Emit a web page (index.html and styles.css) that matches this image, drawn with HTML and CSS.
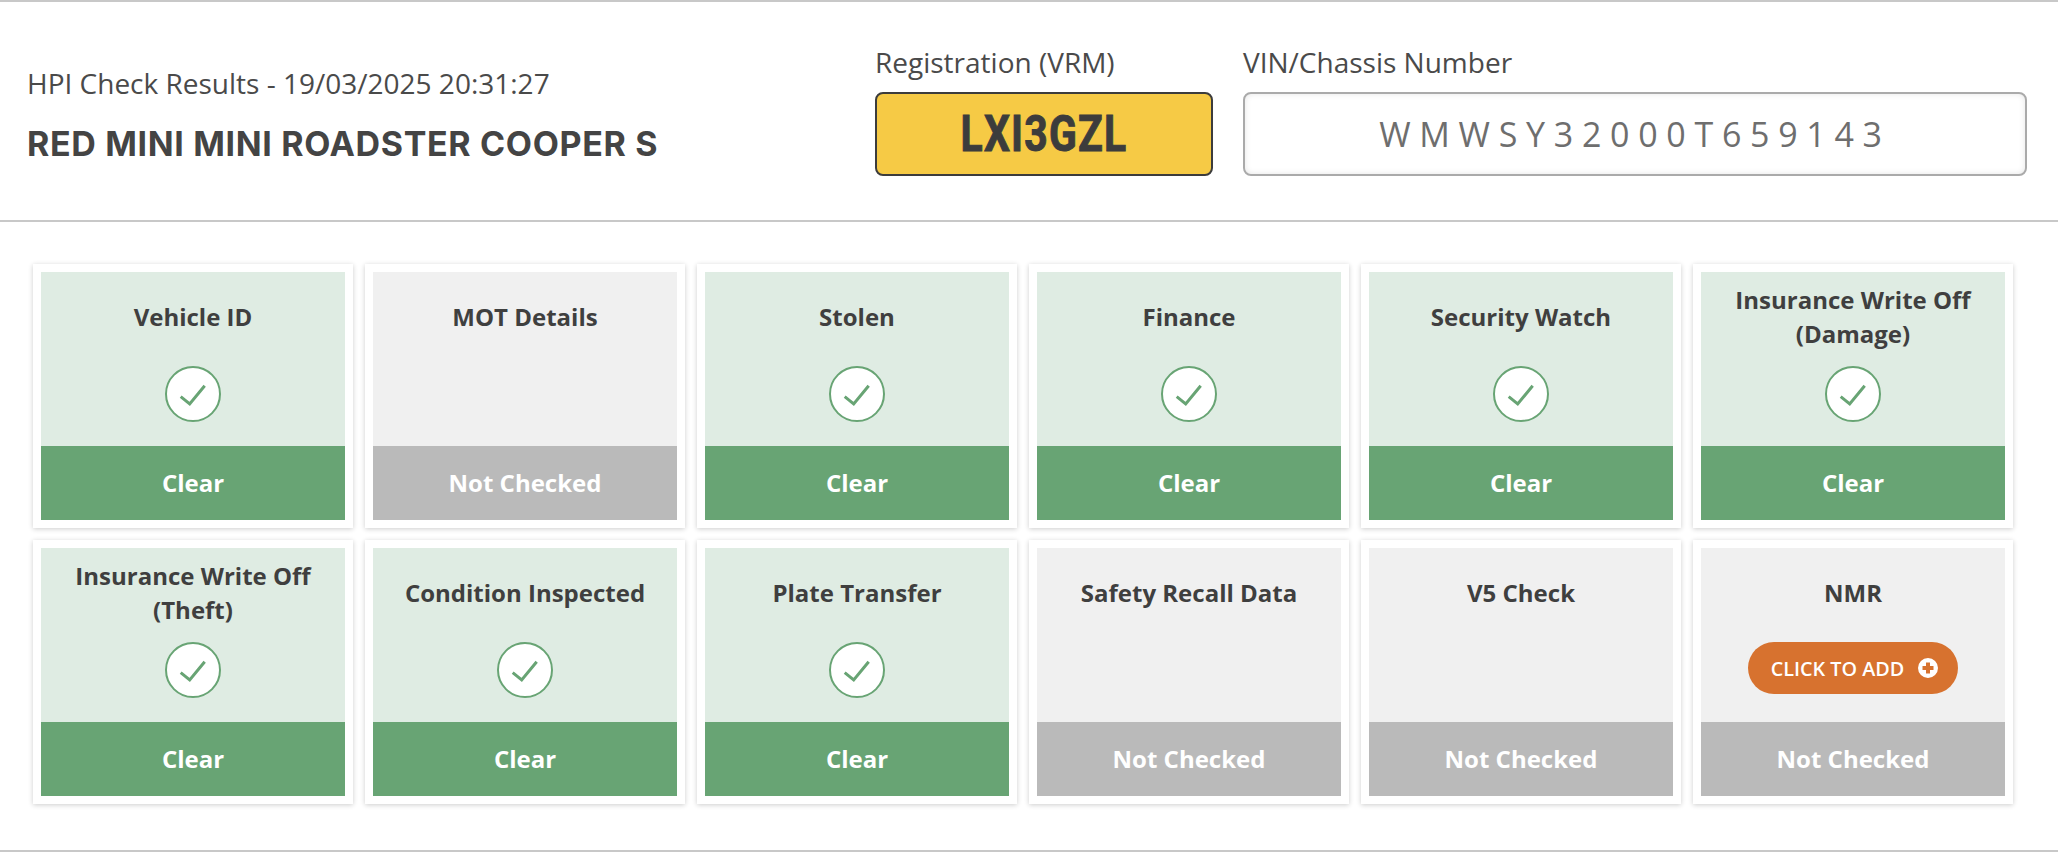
FILE: index.html
```html
<!DOCTYPE html>
<html lang="en">
<head>
<meta charset="utf-8">
<title>HPI Check Results</title>
<link rel="stylesheet" href="styles.css">
</head>
<body>
<svg class="defs" width="0" height="0" aria-hidden="true"><defs>
<symbol id="tick" viewBox="0 0 52 52"><path d="M13.700 28.700 L22.700 36 L37.700 17.700" fill="none" stroke="currentColor" stroke-width="3"/></symbol>
</defs></svg>
<main class="page">
<header class="head">
  <div class="summary">
    <div class="stamp">HPI Check Results - 19/03/2025 20:31:27</div>
    <h1 class="vehicle">RED MINI MINI ROADSTER COOPER S</h1>
  </div>
  <div class="field field-reg">
    <div class="field-label">Registration (VRM)</div>
    <div class="plate"><span class="plate-text">LXI3GZL</span></div>
  </div>
  <div class="field field-vin">
    <div class="field-label">VIN/Chassis Number</div>
    <div class="vin">WMWSY32000T659143</div>
  </div>
</header>
<section class="grid">
  <article class="card ok"><div class="panel"><h2 class="title">Vehicle ID</h2><div class="slot"><svg class="tick"><use href="#tick"/></svg></div></div><div class="bar">Clear</div></article>
  <article class="card na"><div class="panel"><h2 class="title">MOT Details</h2><div class="slot"></div></div><div class="bar">Not Checked</div></article>
  <article class="card ok"><div class="panel"><h2 class="title">Stolen</h2><div class="slot"><svg class="tick"><use href="#tick"/></svg></div></div><div class="bar">Clear</div></article>
  <article class="card ok"><div class="panel"><h2 class="title">Finance</h2><div class="slot"><svg class="tick"><use href="#tick"/></svg></div></div><div class="bar">Clear</div></article>
  <article class="card ok"><div class="panel"><h2 class="title">Security Watch</h2><div class="slot"><svg class="tick"><use href="#tick"/></svg></div></div><div class="bar">Clear</div></article>
  <article class="card ok"><div class="panel"><h2 class="title">Insurance Write Off (Damage)</h2><div class="slot"><svg class="tick"><use href="#tick"/></svg></div></div><div class="bar">Clear</div></article>
  <article class="card ok"><div class="panel"><h2 class="title">Insurance Write Off (Theft)</h2><div class="slot"><svg class="tick"><use href="#tick"/></svg></div></div><div class="bar">Clear</div></article>
  <article class="card ok"><div class="panel"><h2 class="title">Condition Inspected</h2><div class="slot"><svg class="tick"><use href="#tick"/></svg></div></div><div class="bar">Clear</div></article>
  <article class="card ok"><div class="panel"><h2 class="title">Plate Transfer</h2><div class="slot"><svg class="tick"><use href="#tick"/></svg></div></div><div class="bar">Clear</div></article>
  <article class="card na"><div class="panel"><h2 class="title">Safety Recall Data</h2><div class="slot"></div></div><div class="bar">Not Checked</div></article>
  <article class="card na"><div class="panel"><h2 class="title">V5 Check</h2><div class="slot"></div></div><div class="bar">Not Checked</div></article>
  <article class="card na"><div class="panel"><h2 class="title">NMR</h2><div class="slot"><button class="add" type="button">CLICK TO ADD<svg class="plus" viewBox="0 0 20 20"><path fill-rule="evenodd" d="M10 0a10 10 0 1 1 0 20a10 10 0 1 1 0-20zM8 4.500v3.500h-3.500v4h3.500v3.500h4v-3.500h3.500v-4h-3.500v-3.500z"/></svg></button></div></div><div class="bar">Not Checked</div></article>
</section>
</main>
</body>
</html>
```
FILE: styles.css
```css
* { box-sizing: border-box; }
html, body { margin: 0; padding: 0; background: #fff; }
body { font-family: "Open Sans", "Liberation Sans", sans-serif; color: #444; overflow: hidden; }
.defs { display: block; height: 0; }
.page { width: 2058px; height: 852px; border-top: 2px solid #c8c8c8; border-bottom: 2px solid #c8c8c8; }
.head { height: 220px; border-bottom: 2px solid #c8c8c8; display: flex; padding: 41px 31px 0 27px; }
.summary { width: 848px; padding-top: 23px; }
.stamp { font-size: 28px; line-height: 34px; color: #4a4a4a; }
.vehicle { margin: 24px 0 0; font-family: Inter, "Liberation Sans", sans-serif; font-weight: 700; font-size: 34px; letter-spacing: 0.650px; line-height: 40px; color: #444; }
.field-reg { width: 338px; margin-right: 30px; }
.field-vin { flex: 1; }
.field-label { font-size: 28px; line-height: 38px; color: #4a4a4a; margin-bottom: 11px; }
.plate { height: 84px; background: #f6ca45; border: 2px solid #3c3c3c; border-radius: 8px; display: flex; align-items: center; justify-content: center; color: #3c3c3c; }
.plate-text { display: block; font-family: Roboto, "Liberation Sans", sans-serif; font-weight: 700; font-size: 50.500px; line-height: 1; letter-spacing: 1.500px; transform: scaleX(.81); -webkit-text-stroke: 1px #3c3c3c; }
.vin { height: 84px; background: #fff; border: 2px solid #aaa; border-radius: 8px; box-shadow: inset 0 0 6px rgba(0,0,0,.1); display: flex; align-items: center; justify-content: center; font-size: 34px; letter-spacing: 8.700px; color: #6e6e6e; }
.grid { display: grid; grid-template-columns: repeat(6, 320px); grid-auto-rows: 264px; gap: 12px; padding: 42px 0 0 33px; }
.card { background: #fff; padding: 8px; box-shadow: 0 1px 5px rgba(0,0,0,.2); display: flex; flex-direction: column; }
.panel { height: 174px; }
.ok .panel { background: #dfece3; }
.na .panel { background: #f0f0f0; }
.title { margin: 0; height: 90px; padding: 0 20px; display: flex; align-items: center; justify-content: center; text-align: center; font-size: 24px; line-height: 34px; font-weight: 700; color: #3f3f3f; }
.slot { margin-top: 4px; display: flex; justify-content: center; }
.tick { width: 56px; height: 56px; border-radius: 50%; border: 2px solid #68a474; background: #fff; color: #68a474; }
.bar { height: 74px; padding-bottom: 2px; display: flex; align-items: center; justify-content: center; font-size: 24px; font-weight: 700; color: #fff; }
.ok .bar { background: #68a474; }
.na .bar { background: #bababa; }
.add { width: 210px; height: 52px; border: 0; border-radius: 26px; background: #d7722f; color: #fff; font-family: inherit; font-size: 19.800px; font-weight: 600; display: flex; align-items: center; justify-content: center; gap: 14px; padding: 0 0 0 3px; }
.plus { width: 20px; height: 20px; fill: #fff; }
```
